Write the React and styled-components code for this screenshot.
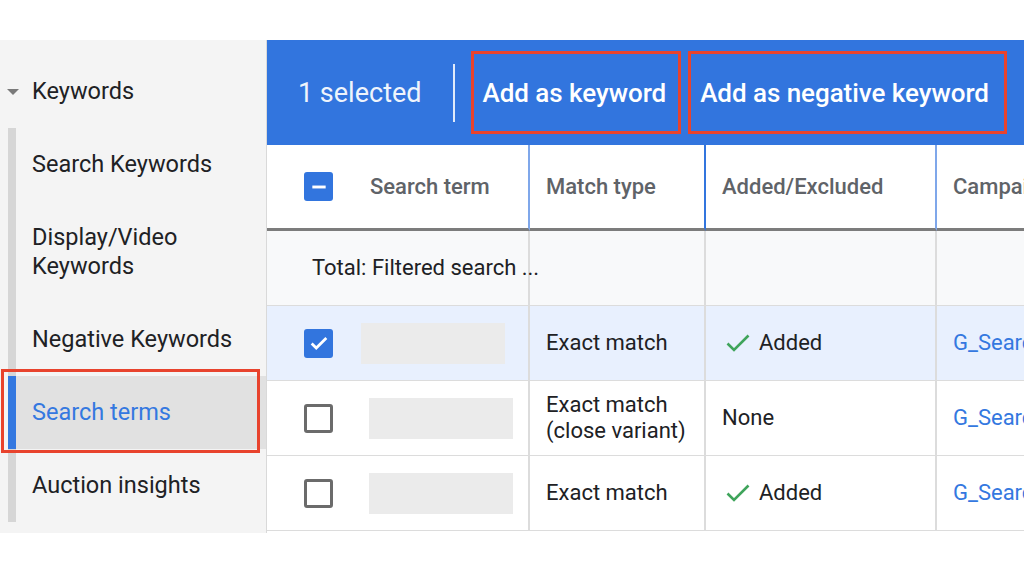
import styled, { createGlobalStyle } from 'styled-components'

const GlobalStyle = createGlobalStyle`
  html, body {
    margin: 0;
    padding: 0;
    background: #fff;
    overflow: hidden;
  }
  body {
    font-family: Roboto, "Liberation Sans", Arial, sans-serif;
    color: #202124;
  }
`

const Page = styled.div`
  padding-top: 40px;
  width: 1024px;
  height: 576px;
  box-sizing: border-box;
  overflow: hidden;
`

const Layout = styled.div`
  display: flex;
  height: 493px;
`

const Sidebar = styled.nav`
  width: 266px;
  flex-shrink: 0;
  background: #f4f4f4;
  border-right: 1px solid #d9d9d9;
`

const SectionHead = styled.div`
  display: flex;
  align-items: center;
  gap: 13px;
  padding: 37px 0 22px 7px;
  font-size: 23.5px;
  line-height: 29px;
  &::before {
    content: '';
    width: 0;
    height: 0;
    border-left: 6px solid transparent;
    border-right: 6px solid transparent;
    border-top: 6px solid #7a7a7a;
  }
`

const NavList = styled.ul`
  list-style: none;
  margin: 0 0 0 8px;
  padding: 0;
  border-left: 8px solid #d6d6d6;
`

const NavItem = styled.li`
  position: relative;
  padding: 22px 8px 22px 16px;
  font-size: 23.5px;
  line-height: 29px;
  color: ${p => (p.$active ? '#3478e0' : '#202124')};
  background: ${p => (p.$active ? '#e1e1e1' : 'transparent')};
  ${p =>
    p.$active &&
    `
    &::before {
      content: '';
      position: absolute;
      left: -8px;
      top: 0;
      bottom: 0;
      width: 8px;
      background: #3478e0;
    }
    &::after {
      content: '';
      position: absolute;
      left: -15px;
      right: 6px;
      top: -7px;
      bottom: -4px;
      border: 3px solid #e8432d;
    }
  `}
`

const Main = styled.main`
  flex: 1;
  min-width: 0;
  overflow: hidden;
  display: flex;
  flex-direction: column;
`

const ActionBar = styled.div`
  height: 105px;
  background: #3275de;
  display: flex;
  align-items: center;
  gap: 7px;
  padding-left: 31px;
  color: #fff;
  white-space: nowrap;
`

const SelectedCount = styled.span`
  font-size: 27px;
  opacity: 0.92;
`

const Divider = styled.span`
  width: 2px;
  height: 58px;
  background: rgba(255, 255, 255, 0.85);
  margin: 0 9px 0 24px;
`

const ActionButton = styled.button`
  height: 83px;
  padding: 0 ${p => p.$tail || 11}px 0 9px;
  border: 3px solid #e8432d;
  background: transparent;
  color: #fff;
  font-family: inherit;
  font-size: 26px;
  font-weight: 500;
  letter-spacing: -0.05px;
  white-space: nowrap;
  cursor: pointer;
`

const Grid = styled.div`
  display: grid;
  grid-template-columns: 263px 176px 231px 320px;
`

const HeadCell = styled.div`
  height: 83px;
  display: flex;
  align-items: center;
  gap: 37px;
  padding-left: ${p => p.$pad || 16}px;
  border-right: 2px solid ${p => p.$line || 'transparent'};
  border-bottom: 3px solid #7c7c7c;
  color: #5f6368;
  font-size: 22px;
  font-weight: 500;
  white-space: nowrap;
  box-sizing: content-box;
`

const Cell = styled.div`
  position: relative;
  z-index: ${p => (p.$spill ? 1 : 0)};
  height: 74px;
  display: flex;
  align-items: center;
  gap: ${p => p.$gap || 0}px;
  padding-left: ${p => p.$pad || 16}px;
  background: ${p => p.$bg || '#fff'};
  border-right: 2px solid #dcdcdc;
  border-bottom: 1px solid #dcdcdc;
  font-size: 22px;
  line-height: 26px;
  color: ${p => (p.$link ? '#3478e0' : '#202124')};
  white-space: nowrap;
  overflow: ${p => (p.$spill ? 'visible' : 'hidden')};
`

const Box = styled.span`
  width: 29px;
  height: 29px;
  flex-shrink: 0;
  box-sizing: border-box;
  border-radius: 3px;
  display: flex;
  align-items: center;
  justify-content: center;
  background: ${p => (p.$on ? '#3275de' : '#fff')};
  border: ${p => (p.$on ? 'none' : '3px solid #6b6b6b')};
`

const Redacted = styled.span`
  width: 144px;
  height: 41px;
  flex-shrink: 0;
  margin-left: ${p => p.$shift || 0}px;
  background: #ebebeb;
`

const Status = styled.span`
  display: flex;
  align-items: center;
  gap: 9px;
  padding-left: ${p => p.$indent || 0}px;
`

function Checkbox({ state }) {
  if (state === 'checked') {
    return (
      <Box $on>
        <svg width="22" height="22" viewBox="0 0 24 24">
          <path d="M4 12.5l5 5L20 6.5" fill="none" stroke="#fff" strokeWidth="3" />
        </svg>
      </Box>
    )
  }
  if (state === 'mixed') {
    return (
      <Box $on>
        <svg width="20" height="20" viewBox="0 0 24 24">
          <path d="M4 12h16" stroke="#fff" strokeWidth="3.5" />
        </svg>
      </Box>
    )
  }
  return <Box />
}

function Added() {
  return (
    <Status $indent={4}>
      <svg width="24" height="18" viewBox="0 0 24 18">
        <path d="M1.5 9.5l6.5 6.5L22.5 1.5" fill="none" stroke="#3fa45b" strokeWidth="2.6" />
      </svg>
      Added
    </Status>
  )
}

const rows = [
  { check: 'checked', shift: 0, match: 'Exact match', status: 'added', bg: '#e8f0fe' },
  { check: 'off', shift: 8, match: ['Exact match', '(close variant)'], status: 'none' },
  { check: 'off', shift: 8, match: 'Exact match', status: 'added' }
]

export default function App() {
  return (
    <Page>
      <GlobalStyle />
      <Layout>
        <Sidebar>
          <SectionHead>Keywords</SectionHead>
          <NavList>
            <NavItem>Search Keywords</NavItem>
            <NavItem>
              Display/Video
              <br />
              Keywords
            </NavItem>
            <NavItem>Negative Keywords</NavItem>
            <NavItem $active>Search terms</NavItem>
            <NavItem>Auction insights</NavItem>
          </NavList>
        </Sidebar>
        <Main>
          <ActionBar>
            <SelectedCount>1 selected</SelectedCount>
            <Divider />
            <ActionButton $tail={12}>Add as keyword</ActionButton>
            <ActionButton $tail={15}>Add as negative keyword</ActionButton>
          </ActionBar>
          <Grid>
            <HeadCell $pad={37} $line="#7fa7ea">
              <Checkbox state="mixed" />
              Search term
            </HeadCell>
            <HeadCell $line="#3275de">Match type</HeadCell>
            <HeadCell $line="#7fa7ea">Added/Excluded</HeadCell>
            <HeadCell>Campaign</HeadCell>

            <Cell $pad={45} $bg="#f8f9fa" $spill>Total: Filtered search ...</Cell>
            <Cell $bg="#f8f9fa" />
            <Cell $bg="#f8f9fa" />
            <Cell $bg="#f8f9fa" />

            {rows.map((r, i) => [
              <Cell key={`a${i}`} $pad={37} $gap={28} $bg={r.bg}>
                <Checkbox state={r.check} />
                <Redacted $shift={r.shift} />
              </Cell>,
              <Cell key={`b${i}`} $bg={r.bg}>
                {Array.isArray(r.match) ? (
                  <span>
                    {r.match[0]}
                    <br />
                    {r.match[1]}
                  </span>
                ) : (
                  r.match
                )}
              </Cell>,
              <Cell key={`c${i}`} $bg={r.bg}>
                {r.status === 'added' ? <Added /> : 'None'}
              </Cell>,
              <Cell key={`d${i}`} $bg={r.bg} $link>
                G_Search
              </Cell>
            ])}
          </Grid>
        </Main>
      </Layout>
    </Page>
  )
}
